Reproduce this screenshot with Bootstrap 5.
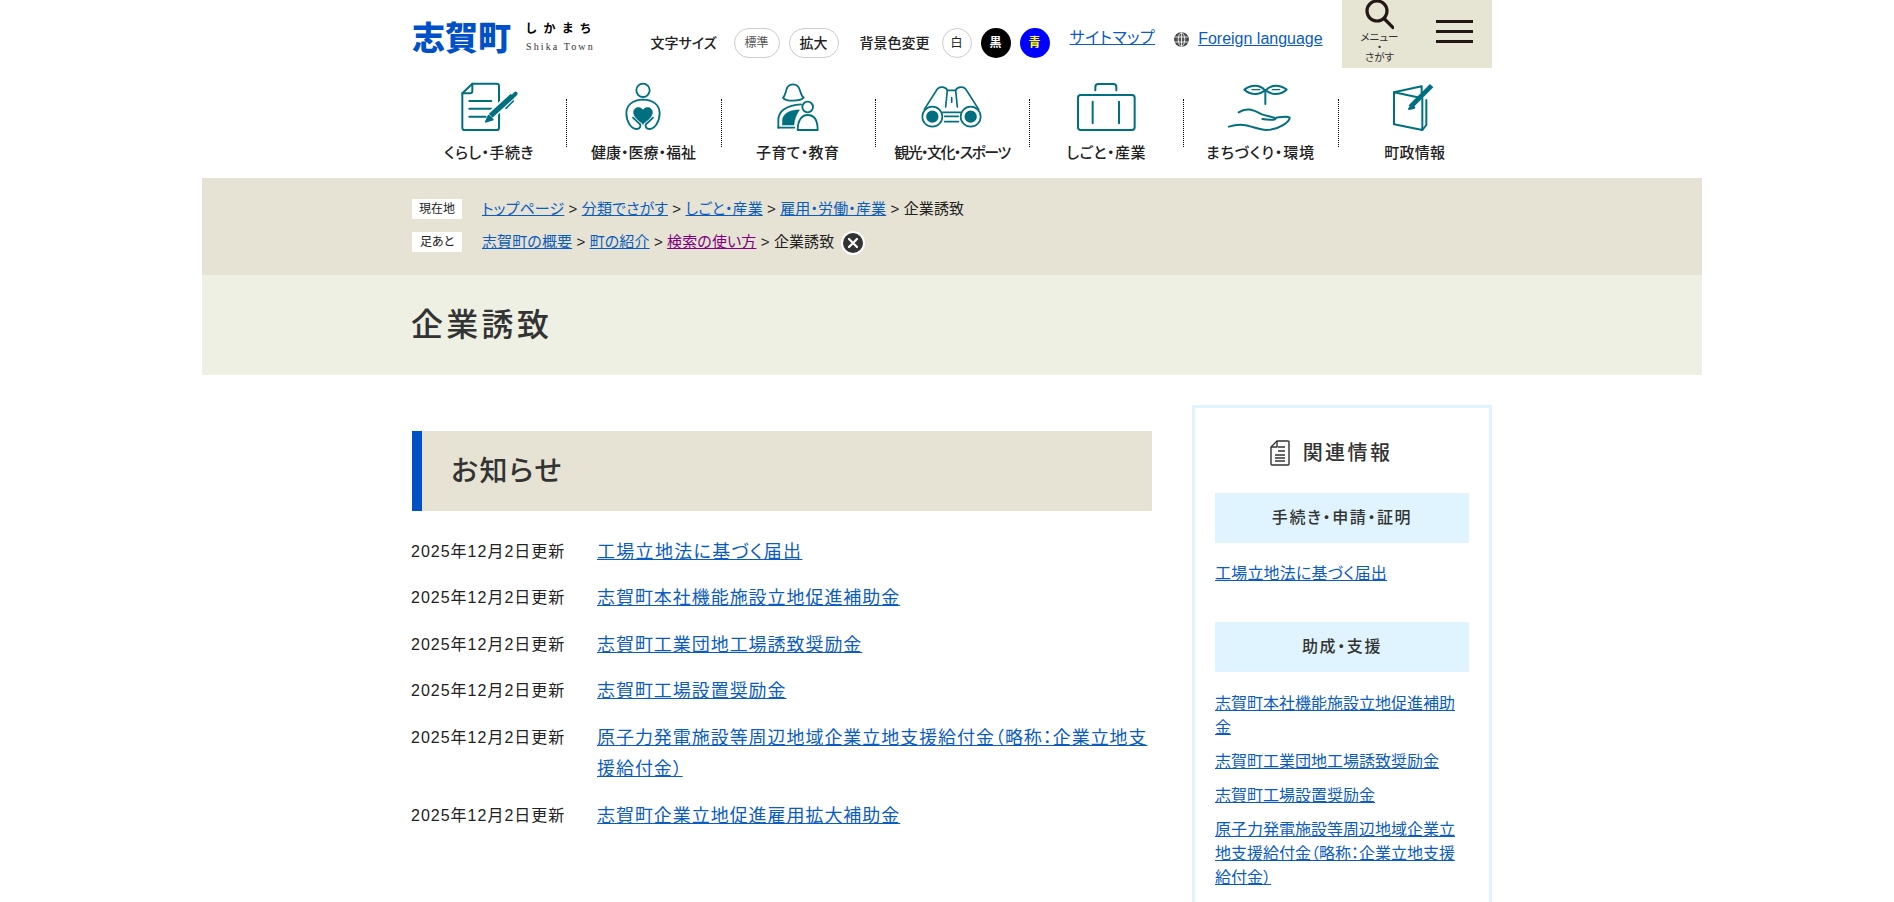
<!DOCTYPE html>
<html lang="ja">
<head>
<meta charset="utf-8">
<title>企業誘致</title>
<link href="https://cdn.jsdelivr.net/npm/bootstrap@5.3.0/dist/css/bootstrap.min.css" rel="stylesheet">
<style>
html,body{height:902px;overflow:hidden;background:#fff}
body{font-family:"Liberation Sans","Noto Sans CJK JP",sans-serif;color:#222;font-feature-settings:"palt";font-size:16px}
a{color:#0b5cbf}
a.seen{color:#800080}
.sheet{width:1500px;margin-left:202px}
.inner{width:1080px;margin-left:210px}
.tophead{height:68px}
.logo-wrap{width:238.500px;padding-top:14px;color:#000}
.logo-mark{font-family:"Noto Sans CJK JP",sans-serif;font-weight:900;font-size:33px;line-height:44px;color:#0050c8;width:114px}
.logo-sub{font-size:12px;font-weight:700;letter-spacing:7px;line-height:15px;padding-top:8px;white-space:nowrap}
.logo-en{font-family:"Liberation Serif",serif;font-size:10px;letter-spacing:2.100px;line-height:13px;padding-top:3px;color:#333;white-space:nowrap}
.ctl-label{font-size:14px;font-weight:500;font-family:"Noto Sans CJK JP",sans-serif;line-height:29px;white-space:nowrap}
.ctl-row{padding-top:28px}
.pill{height:30px;border:1px solid #ccc;border-radius:15px;background:#fff;display:flex;align-items:center;justify-content:center;line-height:1}
.pill-a{width:46px;font-size:12px;color:#555;margin-left:17px}
.pill-b{width:50px;font-size:14px;font-weight:500;margin-left:9px;margin-right:21px;color:#222}
.dot{width:30px;height:30px;border-radius:50%;display:flex;align-items:center;justify-content:center;font-size:12px;line-height:1}
.dot-w{border:1px solid #ccc;margin-left:12px;margin-right:9px}
.dot-k{background:#000;color:#fff;font-weight:700;margin-right:9px}
.dot-b{background:#00f;color:#ff0;font-weight:700;margin-right:20px}
.toplink{font-size:16px;line-height:20px;margin-top:1px}
.toplink-jp{letter-spacing:.4px;margin-top:-.5px}
.globe{margin-left:19px;margin-right:9px;margin-top:4px}
.menubox{width:150px;height:68px;background:#e6e4d3;margin-left:auto}
.searchcol{width:75px;text-align:center;font-size:10.500px;line-height:14px;color:#333}
.searchcol svg{display:block;margin:0 0 2px 19.500px}
.searchcol span{display:block;line-height:9px;padding-top:1px}
.burger{padding-left:19px;padding-top:20px}
.burger i{display:block;width:37px;height:3px;background:#231815;margin-bottom:7px}
.navwrap{height:110px}
.navcell{width:154.28px;position:relative;text-align:center}
.navcell svg{display:block;margin-top:7px}
.navcell b{display:block;font-family:"Noto Sans CJK JP",sans-serif;font-weight:500;font-size:15px;line-height:22px;margin-top:5.500px;white-space:nowrap;color:#222}
.navcell+.navcell::before{content:"";position:absolute;left:0;top:31px;height:48px;border-left:1px dotted #000}
.sp-a{letter-spacing:.4px}
.sp-b{letter-spacing:.3px}
.sp-c{letter-spacing:-1.600px}
.sp-d{letter-spacing:.5px}
.sp-e{letter-spacing:.9px}
.sp-f{letter-spacing:.2px}
.crumbband{background:#e6e3d4;height:97px;padding-top:21px}
.crumbline{font-size:15px;letter-spacing:.12px;line-height:20px;height:33px;white-space:nowrap}
.tag{width:50px;height:20px;background:#fff;font-size:12px;text-align:center;margin-right:20px;line-height:20px;flex:none;letter-spacing:0}
.closer{width:24px;height:24px;margin-left:7px;margin-top:-1px}
.titleband{background:#eef0e3;height:100px}
.titleband h1{font-family:"Noto Sans CJK JP",sans-serif;font-weight:500;font-size:32px;letter-spacing:3.300px;line-height:95px;margin:0 0 0 -1px;color:#333}
.maincol{width:740px;padding-top:56px}
.notice-h{height:80px;background:#e6e3d4;border-left:10px solid #0050c8;padding-left:29px;font-family:"Noto Sans CJK JP",sans-serif;font-weight:500;font-size:28px;letter-spacing:1.600px;line-height:76px;color:#333;margin-bottom:25.500px}
.newsrow{display:flex;font-size:16px;letter-spacing:1px;margin:0 0 15px -1px;line-height:31.5px}
.newsdate{width:186px;flex:none;line-height:29.500px}
.newsrow a{font-size:18px;letter-spacing:.95px}
.newsrow a.wide{letter-spacing:1.300px}
.sidecol{width:300px;margin-left:40px;margin-top:30px;border:3px solid #e0f4ff;border-bottom:0;padding:0 20px;height:600px}
.side-h{font-family:"Noto Sans CJK JP",sans-serif;font-weight:500;font-size:20px;letter-spacing:2.400px;height:85px;line-height:24px;padding:32px 22px 0 0;color:#333}
.side-h svg{margin-right:13px}
.side-sub{height:50px;background:#e0f4ff;text-align:center;font-family:"Noto Sans CJK JP",sans-serif;font-weight:500;font-size:16px;letter-spacing:1.600px;line-height:47px;color:#333}
.side-list{list-style:none;margin:0;padding:0}
.side-list li{line-height:24px;margin-bottom:10px}
.gap1{padding-top:19px;padding-bottom:36px;letter-spacing:.2px}
.gap2{padding-top:20px}
</style>
</head>
<body>
<div class="sheet">
  <div class="inner">
    <div class="tophead d-flex">
      <div class="logo-wrap d-flex">
        <div class="logo-mark">志賀町</div>
        <div>
          <div class="logo-sub">しかまち</div>
          <div class="logo-en">Shika Town</div>
        </div>
      </div>
      <div class="ctl-row d-flex align-items-start">
        <span class="ctl-label">文字サイズ</span>
        <span class="pill pill-a">標準</span>
        <span class="pill pill-b">拡大</span>
        <span class="ctl-label">背景色変更</span>
        <span class="dot dot-w">白</span>
        <span class="dot dot-k">黒</span>
        <span class="dot dot-b">青</span>
        <a class="toplink toplink-jp" href="#">サイトマップ</a>
        <svg class="globe" width="15" height="15" viewBox="0 0 15 15" fill="none" stroke="#333" stroke-width="1.1"><circle cx="7.5" cy="7.5" r="6.8" fill="#555"/><ellipse cx="7.5" cy="7.5" rx="3.2" ry="6.8" stroke="#fff" stroke-width=".8"/><path d="M.5 5h14M.5 10h14M7.5.5v14" stroke="#fff" stroke-width=".8"/></svg>
        <a class="toplink" href="#">Foreign language</a>
      </div>
      <div class="menubox d-flex">
        <div class="searchcol">
          <svg width="32" height="30" viewBox="0 0 32 30" fill="none" stroke="#231815" stroke-width="3.2"><circle cx="15" cy="11" r="10"/><path d="M22 18.500l9 9" stroke-linecap="round"/></svg>
          <span>メニュー</span><span>・</span><span>さがす</span>
        </div>
        <div class="burger"><i></i><i></i><i></i></div>
      </div>
    </div>
    <div class="navwrap d-flex">
      <div class="navcell">
        <svg width="154" height="60" viewBox="-114 0 462 180" fill="none" stroke="#006f7f" stroke-width="6" stroke-linejoin="round" stroke-linecap="round"><path d="M37 55L67 26H140a7 7 0 0 1 7 7V158a7 7 0 0 1-7 7H44a7 7 0 0 1-7-7Z"/><path d="M67 26V48a7 7 0 0 1-7 7H37"/><path d="M58 78h66M58 101h66M58 125h50"/><path d="M122 122L188 60" stroke="#fff" stroke-width="26"/><path d="M122 122L188 62" stroke-width="16" stroke-linecap="butt"/><path d="M108 140l8-18 12 12Z" fill="#006f7f"/><path d="M197 56l-6 6" stroke-width="12"/><path d="M168 100L190 78" stroke-width="5"/></svg>
        <b class="sp-a">くらし・手続き</b>
      </div>
      <div class="navcell">
        <svg width="154" height="60" viewBox="-131 0 462 180" fill="none" stroke="#006f7f" stroke-width="5.500" stroke-linecap="round" stroke-linejoin="round"><circle cx="100" cy="46" r="20"/><path d="M100 74C70 74 50 90 50 115C50 140 65 162 80 162C92 162 96 150 88 145L70 128"/><path d="M100 74C130 74 150 90 150 115C150 140 135 162 120 162C108 162 104 150 112 145L130 128"/><path d="M100 147C85 135 72 126 72 112C72 97 92 92 100 106C108 92 128 97 128 112C128 126 115 135 100 147Z" fill="#006f7f" stroke-width="2"/></svg>
        <b>健康・医療・福祉</b>
      </div>
      <div class="navcell">
        <svg width="154" height="60" viewBox="332 0 462 180" fill="none" stroke="#006f7f" stroke-width="5.500" stroke-linecap="round" stroke-linejoin="round"><path d="M518 68C530 60 522 28 548 28C574 28 566 60 580 68C570 80 525 80 518 68Z"/><path d="M504 158V135C504 108 530 90 572 88"/><path d="M504 158H552"/><path d="M516 150V135C518 118 535 104 568 104C558 118 552 135 551 150Z" fill="#006f7f" stroke-width="1"/><circle cx="592" cy="96" r="16"/><path d="M562 165C562 135 575 120 592 120C610 120 622 135 622 165Z"/></svg>
        <b class="sp-b">子育て・教育</b>
      </div>
      <div class="navcell">
        <svg width="154" height="60" viewBox="-75 0 462 180" fill="none" stroke="#006f7f" stroke-width="5" stroke-linejoin="round" stroke-linecap="round"><circle cx="97" cy="125" r="30"/><circle cx="97" cy="125" r="16" fill="#006f7f"/><circle cx="212" cy="125" r="30"/><circle cx="212" cy="125" r="16" fill="#006f7f"/><path d="M73 103L112 42C120 32 138 36 142 46L137 96"/><path d="M236 103L197 42C189 32 171 36 167 46L172 96"/><path d="M142 46H167M128 112H181M134 124H175M134 140H175"/><path d="M155 68V82" stroke-width="5"/></svg>
        <b class="sp-c">観光・文化・スポーツ</b>
      </div>
      <div class="navcell">
        <svg width="154" height="60" viewBox="387 0 462 180" fill="none" stroke="#006f7f" stroke-width="6" stroke-linejoin="round" stroke-linecap="round"><rect x="534" y="60" width="170" height="105" rx="8"/><path d="M586 46V36a9 9 0 0 1 9-9H640a9 9 0 0 1 9 9V46"/><path d="M578 80V145M657 80V145"/></svg>
        <b class="sp-d">しごと・産業</b>
      </div>
      <div class="navcell">
        <svg width="154" height="60" viewBox="-80 0 462 180" fill="none" stroke="#006f7f" stroke-width="6" stroke-linejoin="round" stroke-linecap="round"><path d="M166 46C150 28 125 28 104 44C125 62 150 60 166 46Z"/><path d="M168 46C184 28 210 28 231 44C210 62 184 60 168 46Z"/><path d="M127 44H150M188 44H210" stroke-width="4"/><path d="M167 46V87"/><path d="M87 112C115 94 135 108 157 118C175 125 195 126 198 131C198 135 175 135 158 132"/><path d="M200 128C215 126 232 122 240 128C240 138 210 165 170 165C135 165 110 138 58 155"/></svg>
        <b class="sp-e">まちづくり・環境</b>
      </div>
      <div class="navcell">
        <svg width="154" height="60" viewBox="383 0 462 180" fill="none" stroke="#006f7f" stroke-width="6" stroke-linejoin="round" stroke-linecap="round"><path d="M551 52V148L636 165V70L551 52Z"/><path d="M551 52L634 34V58"/><path d="M636 165L648 150V75"/><path d="M600 96L664 32" stroke-width="14" stroke-linecap="butt"/><path d="M596 102l8-12 8 8Z" fill="#006f7f"/></svg>
        <b class="sp-f">町政情報</b>
      </div>
    </div>
  </div>

  <div class="crumbband">
    <div class="inner">
      <div class="crumbline d-flex align-items-start">
        <span class="tag">現在地</span>
        <span><a href="#">トップページ</a> &gt; <a href="#">分類でさがす</a> &gt; <a href="#">しごと・産業</a> &gt; <a href="#">雇用・労働・産業</a> &gt; 企業誘致</span>
      </div>
      <div class="crumbline d-flex align-items-start">
        <span class="tag">足あと</span>
        <span><a href="#">志賀町の概要</a> &gt; <a href="#">町の紹介</a> &gt; <a class="seen" href="#">検索の使い方</a> &gt; 企業誘致</span>
        <svg class="closer" viewBox="0 0 24 24"><circle cx="12" cy="12" r="12" fill="#fff"/><circle cx="12" cy="12" r="10" fill="#333"/><path d="M8 8l8 8M16 8l-8 8" stroke="#fff" stroke-width="2.200" stroke-linecap="round"/></svg>
      </div>
    </div>
  </div>
  <div class="titleband"><div class="inner"><h1>企業誘致</h1></div></div>

  <div class="inner d-flex align-items-start">
    <div class="maincol">
      <h2 class="notice-h">お知らせ</h2>
      <div class="newsrow"><span class="newsdate">2025年12月2日更新</span><a class="wide" href="#">工場立地法に基づく届出</a></div>
      <div class="newsrow"><span class="newsdate">2025年12月2日更新</span><a href="#">志賀町本社機能施設立地促進補助金</a></div>
      <div class="newsrow"><span class="newsdate">2025年12月2日更新</span><a href="#">志賀町工業団地工場誘致奨励金</a></div>
      <div class="newsrow"><span class="newsdate">2025年12月2日更新</span><a href="#">志賀町工場設置奨励金</a></div>
      <div class="newsrow"><span class="newsdate">2025年12月2日更新</span><span><a href="#">原子力発電施設等周辺地域企業立地支援給付金（略称：企業立地支援給付金）</a></span></div>
      <div class="newsrow"><span class="newsdate">2025年12月2日更新</span><a href="#">志賀町企業立地促進雇用拡大補助金</a></div>
    </div>
    <aside class="sidecol">
      <div class="side-h d-flex justify-content-center align-items-start">
        <svg width="20" height="26" viewBox="0 0 20 26" fill="none" stroke="#333" stroke-width="1.400" stroke-linejoin="round"><path d="M1 7L7 1H18a1 1 0 0 1 1 1V24a1 1 0 0 1-1 1H2a1 1 0 0 1-1-1Z"/><path d="M7 1V7H1M8 7h7M8 11h7M5 15h10M5 18h10M5 21h10"/></svg>
        <span>関連情報</span>
      </div>
      <div class="side-sub">手続き・申請・証明</div>
      <div class="gap1"><a href="#">工場立地法に基づく届出</a></div>
      <div class="side-sub">助成・支援</div>
      <ul class="side-list gap2">
        <li><a href="#">志賀町本社機能施設立地促進補助金</a></li>
        <li><a href="#">志賀町工業団地工場誘致奨励金</a></li>
        <li><a href="#">志賀町工場設置奨励金</a></li>
        <li><a href="#">原子力発電施設等周辺地域企業立地支援給付金（略称：企業立地支援給付金）</a></li>
      </ul>
    </aside>
  </div>
</div>
<script src="https://cdn.jsdelivr.net/npm/bootstrap@5.3.0/dist/js/bootstrap.bundle.min.js"></script>
</body>
</html>
